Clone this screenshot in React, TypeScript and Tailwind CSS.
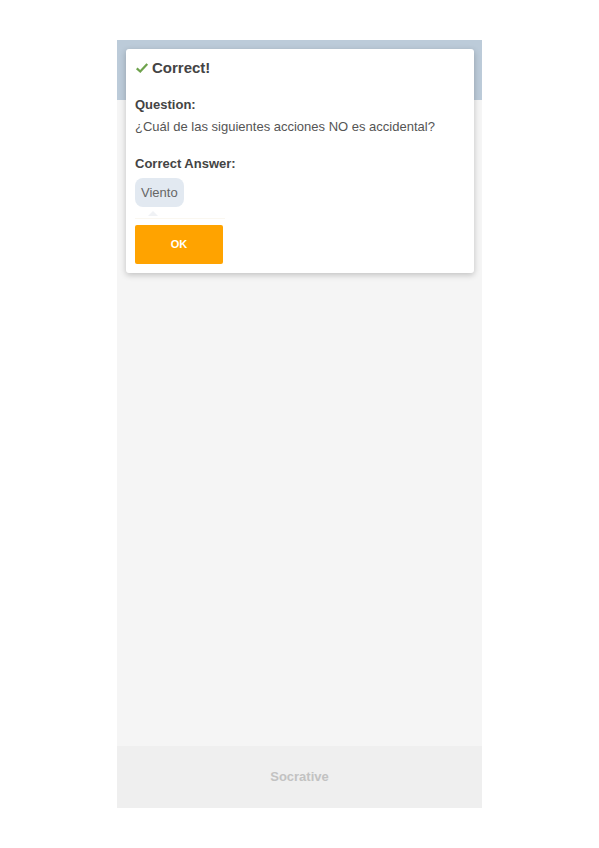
import React from "react";

export default function App() {
  return (
    <div className="min-h-[848px] w-full bg-white font-['Liberation_Sans',Arial,sans-serif]">
      <div className="pt-[40px] pl-[117px]">
        <div className="relative flex h-[768px] w-[365px] flex-col bg-[#f5f5f5]">
          <div className="h-[60px] bg-[#bccbd9]" />
          <div className="flex-1" />
          <div className="flex h-[62px] items-center justify-center bg-[#efefef]">
            <span className="text-[13px] font-bold text-[#c2c2c2]">Socrative</span>
          </div>

          <div className="absolute left-[9px] top-[9px] w-[348px] rounded-[3px] bg-white px-[9px] pt-[10px] pb-[9px] shadow-[0_2px_6px_rgba(0,0,0,0.22)]">
            <div className="flex h-[18px] items-center gap-[3px]">
              <svg width="14" height="14" viewBox="0 0 16 16" className="mt-[-1px]">
                <path d="M2 8.5 L6 12 L14 3.5" fill="none" stroke="#6ea24c" strokeWidth="2.6" strokeLinejoin="miter" />
              </svg>
              <span className="text-[15px] font-bold leading-[18px] text-[#444]">Correct!</span>
            </div>
            <div className="mt-[20px] text-[13px] font-bold leading-[16px] text-[#444]">Question:</div>
            <div className="mt-[6px] text-[13px] leading-[16px] text-[#555]">
              ¿Cuál de las siguientes acciones NO es accidental?
            </div>
            <div className="mt-[21px] text-[13px] font-bold leading-[16px] text-[#444]">Correct Answer:</div>
            <div className="mt-[6px] flex">
              <div className="flex h-[29px] items-center rounded-[8px] bg-[#e2e9f1] px-[6px] text-[13px] text-[#666]">
                Viento
              </div>
            </div>
            <div className="relative h-[18px]">
              <div className="absolute left-[13px] top-[4px] h-0 w-0 border-x-[5px] border-b-[5px] border-x-transparent border-b-[#f0f2f5]" />
              <div className="absolute left-0 top-[11px] h-px w-[90px] bg-[#faf7f0]" />
            </div>
            <button className="flex h-[39px] w-[88px] items-center justify-center rounded-[2px] bg-[#ffa300] text-[11px] font-bold text-white">
              OK
            </button>
          </div>
        </div>
      </div>
    </div>
  );
}
